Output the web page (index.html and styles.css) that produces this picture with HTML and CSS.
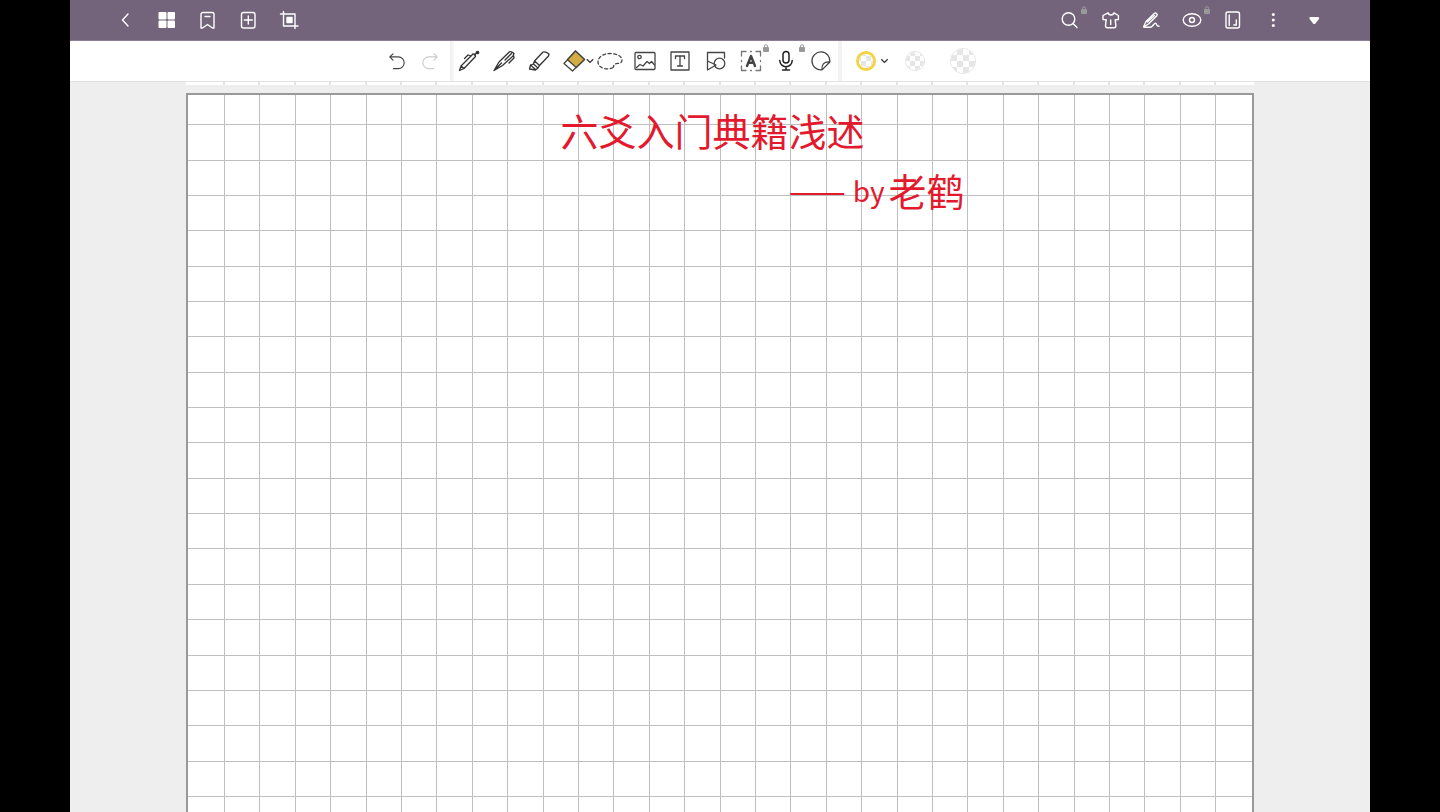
FILE: index.html
```html
<!DOCTYPE html>
<html lang="zh-CN">
<head>
<meta charset="utf-8">
<title>六爻入门典籍浅述</title>
<link rel="stylesheet" href="styles.css">
</head>
<body>
<svg class="defs" aria-hidden="true">
  <symbol id="lock" viewBox="0 0 6 8"><path d="M1.500 3.500V2.200a1.500 1.500 0 0 1 3 0V3.500" fill="none" stroke="currentColor"/><rect y="3" width="6" height="5" rx="1" fill="currentColor"/></symbol>
  <symbol id="chevron" viewBox="0 0 8 6"><path d="M.8 1.200 4 4.400 7.200 1.200" fill="none" stroke="#333" stroke-width="1.300"/></symbol>
</svg>
<div class="app">
  <header class="titlebar">
    <nav class="bar-group">
      <button class="bar-button" aria-label="返回"><svg class="icon" viewBox="0 0 20 20"><path d="M12 4 6.500 10l5.500 6"/></svg></button>
      <button class="bar-button" aria-label="缩略图"><svg class="icon solid" viewBox="0 0 20 20"><rect x="1.500" y="2" width="8" height="7.500" rx="1"/><rect x="10.500" y="2" width="7.500" height="7.500" rx="1"/><rect x="1.500" y="10.500" width="8" height="7.500" rx="1"/><rect x="10.500" y="10.500" width="7.500" height="7.500" rx="1"/></svg></button>
      <button class="bar-button" aria-label="书签"><svg class="icon" viewBox="0 0 20 20"><path d="M3 18V4.500a2 2 0 0 1 2-2h9a2 2 0 0 1 2 2V18h-1.500l-5-3.500-5 3.500ZM7 6.500h5"/></svg></button>
      <button class="bar-button" aria-label="添加页面"><svg class="icon" viewBox="0 0 20 20"><rect x="2.500" y="2.500" width="13.500" height="15.500" rx="2"/><path d="M9.300 6v8M5.300 10h8"/></svg></button>
      <button class="bar-button" aria-label="裁剪"><svg class="icon" viewBox="0 0 20 20"><path d="M.5 4H15v14.500M3.500 1.500V16H18"/><rect class="fill" x="7" y="7.500" width="5" height="5"/></svg></button>
    </nav>
    <nav class="bar-group">
      <button class="bar-button" aria-label="搜索"><svg class="icon" viewBox="0 0 20 20"><circle cx="9.500" cy="9" r="6.300"/><path d="m14 13.500 4 4"/></svg><svg class="badge"><use href="#lock"/></svg></button>
      <button class="bar-button" aria-label="主题"><svg class="icon" viewBox="0 0 20 20"><path d="M8 2.800 3 5.500v4l3.200.2-.7 6q0 2 2 2h6.400q2 0 2-2l-.7-6 3.200-.2v-4L14 2.800c-.8 3-5.200 3-6 0ZM10.700 10v4.500"/></svg></button>
      <button class="bar-button" aria-label="手写"><svg class="icon" viewBox="0 0 20 20"><path d="M2.500 17 5 11.500 13.500 3.300q1.300-.8 2.200.3t.1 2.200L7.500 14 2.500 17ZM6.500 12l7-6.500M3.500 17.300H9c3 0 3.500-4 5.500-4 1.500 0 .5 3 3.500 3"/></svg></button>
      <button class="bar-button" aria-label="阅读模式"><svg class="icon" viewBox="0 0 20 20"><ellipse cx="10" cy="10" rx="8.800" ry="6.300"/><circle cx="10" cy="10" r="2.500"/></svg><svg class="badge"><use href="#lock"/></svg></button>
      <button class="bar-button" aria-label="分屏"><svg class="icon" viewBox="0 0 20 20"><rect x="3" y="2" width="13.500" height="16" rx="2"/><path d="M6.200 5v10.500M13.300 10v5h-2.500"/></svg></button>
      <button class="bar-button" aria-label="更多"><svg class="icon solid" viewBox="0 0 20 20"><circle cx="9.300" cy="4.500" r="1.500"/><circle cx="9.300" cy="10" r="1.500"/><circle cx="9.300" cy="15.500" r="1.500"/></svg></button>
      <button class="bar-button" aria-label="展开"><svg class="icon solid" viewBox="0 0 20 20"><path d="M5.500 7H13q2 .3 1 2l-4 5H8.500l-4-5q-1-1.700 1-2Z"/></svg></button>
    </nav>
  </header>

  <div class="toolbar" role="toolbar">
    <div class="history">
      <button class="tool" aria-label="撤销"><svg class="icon" viewBox="0 0 20 20"><path d="M5.500 2 2 5.500 5.500 9M2 5.500h9.500a6.500 6.500 0 0 1 0 13H6"/></svg></button>
      <button class="tool faded" aria-label="重做"><svg class="icon" viewBox="0 0 20 20"><path d="M14.500 2 18 5.500 14.500 9M18 5.500H8.500a6.500 6.500 0 0 0 0 13H14"/></svg></button>
    </div>
    <div class="tools">
      <button class="tool" aria-label="圆珠笔"><svg class="icon pen" viewBox="0 0 20 20"><path d="m.5 19.500 1.500-4.500L14 3q2.500-.2 2.500 2.500L5 17.500ZM2 15l3 2.500M5.500 7.500 9 4l3 1M15.500 4 18 1.500"/><circle class="fill" cx="18.500" cy="1.500" r="1.200"/></svg></button>
      <button class="tool" aria-label="钢笔"><svg class="icon pen" viewBox="0 0 20 20"><path d="M0 19.500 5 11 15.500.8q2-.6 4.500 1.700L19 5 8.500 14.500ZM0 19.500 7.500 12M11 9l6.500-6.500M19.500 4.500 20 7l-5 5"/></svg></button>
      <button class="tool" aria-label="荧光笔"><svg class="icon pen" viewBox="0 0 20 20"><path d="M5.500 10 14 1q2.500-.8 6 2l-.5 2-9 9.500ZM5.500 10l-1 3 4.500 4 1.500-2.500M4.500 13l-3 1-1 4 6 1L9 17M1.500 14l5 4.500"/></svg></button>
      <button class="tool" aria-label="橡皮擦"><svg class="icon eraser" viewBox="0 0 22 20"><path d="M1 12.500 12.500 0l9 8.500L9.500 20Z" fill="#fff"/><path d="M4.500 8.800 12.500 0l9 8.500-8.300 8Z" fill="#d3ad42"/></svg><svg class="more"><use href="#chevron"/></svg></button>
      <button class="tool" aria-label="套索"><svg class="icon lasso" viewBox="0 0 26 20"><path stroke-dasharray="3 2.500" d="M16 16.500C11 19.500 1 17.500 1 11c0-5 5-8.500 12-8.500s12 3 12 6.500c0 4-4 3-7 4-2 .8-.5 2-2 3.500Z"/></svg></button>
      <button class="tool" aria-label="图片"><svg class="icon wide" viewBox="0 0 22 20"><rect x="1" y="1.500" width="20" height="17" rx="1"/><circle cx="5.500" cy="6" r="1.700"/><path d="M2.500 16.500 6 13.500l3 1.500 4-4.500 2.500 2 2-2 3 3.500"/></svg></button>
      <button class="tool" aria-label="文本"><svg class="icon" viewBox="0 0 20 20"><rect x="1" y="1" width="18" height="18"/><path d="M5.500 7.500V5h9v2.500M10 5v10M7.500 15h5"/></svg></button>
      <button class="tool" aria-label="形状"><svg class="icon" viewBox="0 0 20 20"><path d="M1.500 10V1.500h17V7M1.500 10l8.500 4-8.500 5Z"/><circle cx="13.500" cy="12.500" r="5.300"/></svg></button>
      <button class="tool" aria-label="文字识别"><svg class="icon" viewBox="0 0 20 20"><path stroke="#777" d="M.5 5V.5H5M9.500.5h1M15 .5h4.500V5M19.500 9.500v1M19.500 15v4.500H15M10.500 19.500h-1M5 19.500H.5V15M.5 10.500v-1"/><path stroke-width="2.400" d="M6 15l4-10 4 10M7.500 11.800h5"/></svg><svg class="badge"><use href="#lock"/></svg></button>
      <button class="tool" aria-label="录音"><svg class="icon dark" viewBox="0 0 20 20"><rect x="7" y=".5" width="6" height="11.500" rx="3"/><path d="M3.800 9.500a6.200 6.200 0 0 0 12.400 0M10 16v3M6.500 19h7"/></svg><svg class="badge"><use href="#lock"/></svg></button>
      <button class="tool" aria-label="贴纸"><svg class="icon" viewBox="0 0 20 20"><path d="M11 18.900A9 9 0 1 1 18.900 11L11 18.900Zm0 0c-.5-5 1.500-8.500 7.900-7.900"/></svg></button>
    </div>
    <div class="swatches">
      <button class="swatch selected" aria-label="橡皮擦一"><span class="checker"></span></button>
      <button class="swatch-menu" aria-label="橡皮擦选项"><svg class="chevron"><use href="#chevron"/></svg></button>
      <button class="swatch medium" aria-label="橡皮擦二"><span class="checker"></span></button>
      <button class="swatch large" aria-label="橡皮擦三"><span class="checker"></span></button>
    </div>
  </div>

  <main class="canvas">
    <div class="sheet-end"><svg class="grid" viewBox="0 0 1064 4" preserveAspectRatio="none"><use href="#columns"/></svg></div>
    <article class="sheet">
      <svg class="grid lines" viewBox="0 0 1064 740" preserveAspectRatio="none" aria-hidden="true">
        <path id="columns" d="M36 0v740M71 0v740M107 0v740M142 0v740M178 0v740M213 0v740M248 0v740M284 0v740M319 0v740M355 0v740M390 0v740M425 0v740M461 0v740M496 0v740M532 0v740M567 0v740M602 0v740M638 0v740M673 0v740M709 0v740M744 0v740M779 0v740M815 0v740M850 0v740M886 0v740M921 0v740M956 0v740M992 0v740M1027 0v740"/>
        <path d="M0 29h1064M0 65h1064M0 100h1064M0 135h1064M0 171h1064M0 206h1064M0 241h1064M0 277h1064M0 312h1064M0 347h1064M0 383h1064M0 418h1064M0 453h1064M0 489h1064M0 524h1064M0 560h1064M0 595h1064M0 630h1064M0 666h1064M0 701h1064M0 736h1064"/>
      </svg>
      <div class="ink">
        <h1 class="ink-title">六爻入门典籍浅述</h1>
        <p class="ink-author"><span class="dash">——</span><span class="by">by</span><span>老鹤</span></p>
      </div>
    </article>
  </main>
</div>
</body>
</html>
```
FILE: styles.css
```css
* { box-sizing: border-box; }

body {
  margin: 0;
  background: #000;
  font-family: "Liberation Sans", "Noto Sans CJK SC", sans-serif;
}

.defs { position: absolute; width: 0; height: 0; }

.app {
  display: flex;
  flex-direction: column;
  height: 100vh;
  margin: 0 70px;
  overflow: hidden;
  background: #eee;
}

button {
  padding: 0;
  border: 0;
  background: none;
  color: inherit;
}

.icon {
  display: block;
  width: 20px;
  height: 20px;
  overflow: visible;
  fill: none;
  stroke: currentColor;
  stroke-width: 1.4;
  stroke-linecap: round;
  stroke-linejoin: round;
}
.solid, .fill { fill: currentColor; }
.solid { stroke: none; }

.titlebar {
  display: flex;
  flex: none;
  justify-content: space-between;
  height: 41px;
  padding: 0 35px;
  border-bottom: 1px solid #8b7f93;
  background: #73647b;
  color: #fff;
}
.bar-group { display: flex; }
.bar-button {
  position: relative;
  display: grid;
  place-items: center;
  width: 41px;
}

.badge {
  position: absolute;
  top: 6px;
  right: 2px;
  width: 6px;
  height: 8px;
  color: #999;
}

.toolbar {
  display: flex;
  flex: none;
  height: 41px;
  padding-left: 310px;
  border-bottom: 1px solid #e2e2e2;
  background: #fff;
}
.history { display: flex; width: 70px; }
.history .tool { width: 33px; }
.history .icon { width: 18px; height: 18px; stroke-width: 1.2; }
.tool {
  position: relative;
  display: grid;
  place-items: center;
  color: #444;
}
.tool .icon { stroke-width: 1.3; }
.tool .dark { color: #222; stroke-width: 1.5; }
.tool .pen { color: #333; }
.tool .eraser, .tool .wide { width: 22px; }
.tool .lasso { width: 26px; }
.tool .badge { top: 3px; right: -1px; }
.history .faded { color: #ccc; }
.tools {
  display: grid;
  grid-template-columns: repeat(11, 1fr);
  width: 392px;
  padding: 0 3px 0 1px;
  background: linear-gradient(90deg, #eee, #fafafa 4px, #fff 4px, #fff 388px, #f3f3f3 388px);
}
.more {
  position: absolute;
  top: 17px;
  right: -2px;
  width: 8px;
  height: 6px;
}

.swatches {
  display: flex;
  align-items: center;
  padding-left: 14px;
}
.swatch {
  display: block;
  width: 20px;
  height: 20px;
  border: 1px solid #e4e4e4;
  border-radius: 50%;
  overflow: hidden;
}
.selected { border: 3px solid #f3d33f; }
.checker {
  display: block;
  width: 100%;
  height: 100%;
  background: repeating-conic-gradient(#e6e6e6 0 25%, #fff 0 50%) 50% / 10px 10px;
}
.medium { margin-left: 15px; }
.large { width: 26px; height: 26px; margin-left: 25px; }
.large .checker { background-size: 12px 12px; }
.swatch-menu { width: 14px; padding-left: 4px; }
.chevron { display: block; width: 9px; height: 6px; }

.canvas {
  display: flex;
  flex: 1;
  flex-direction: column;
  gap: 8px;
  min-height: 0;
  padding: 0 116px;
}
.sheet-end {
  flex: none;
  height: 3px;
  padding: 0 2px;
  background: #fff;
}
.grid {
  display: block;
  width: 100%;
  height: 100%;
  overflow: hidden;
  fill: none;
  stroke: #bfbfbf;
  stroke-width: 1;
  shape-rendering: crispEdges;
}
.sheet {
  display: grid;
  flex: none;
  border: 2px solid #999;
  background: #fff;
}
.lines, .ink { grid-area: 1 / 1; }
.lines { height: 740px; }

.ink {
  padding-top: 13px;
  color: #e3192e;
  font-family: "Noto Sans CJK SC", sans-serif;
  font-size: 38px;
  line-height: 44px;
}
.ink-title {
  margin: 0 0 16px 35%;
  font-size: 38px;
  font-weight: 400;
}
.ink-author {
  display: flex;
  align-items: center;
  margin: 0 0 0 56%;
  padding-left: 5px;
}
.dash { font-size: 34px; }
.by {
  margin: 0 4px 0 7px;
  font-size: 28px;
}
```
